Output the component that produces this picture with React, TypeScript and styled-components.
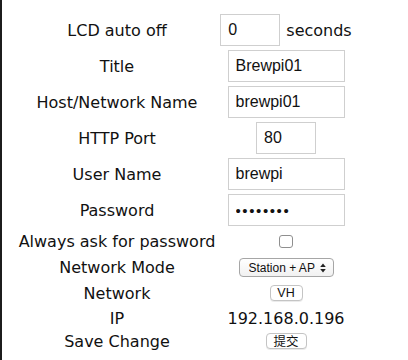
import React from 'react';
import styled, { createGlobalStyle } from 'styled-components';

const GlobalStyle = createGlobalStyle`
  html, body {
    margin: 0;
    padding: 0;
    background: #fff;
  }
  body {
    font-family: 'DejaVu Sans', Verdana, sans-serif;
    font-size: 16px;
    color: #111;
  }
`;

const Page = styled.div`
  min-height: 100vh;
  box-sizing: border-box;
  border-left: 2px solid #1c1c1c;
  padding: 12px 0 0 15px;
`;

const Form = styled.div`
  display: grid;
  grid-template-columns: 200px 134px;
  column-gap: 2px;
`;

const Label = styled.div<{ $h: number }>`
  height: ${(p) => p.$h}px;
  display: flex;
  align-items: center;
  justify-content: center;
  white-space: nowrap;
`;

const Value = styled(Label)`
  gap: 6px;
`;

const TextInput = styled.input<{ $w: number }>`
  box-sizing: border-box;
  width: ${(p) => p.$w}px;
  height: 32px;
  padding: 0 7px;
  border: 1px solid #cfcfcf;
  border-radius: 0;
  font-family: 'Liberation Sans', Arial, sans-serif;
  font-size: 16px;
  color: #111;
  background: #fff;
  outline: none;

  &[type='password'] {
    letter-spacing: 1.6px;
    font-size: 15px;
  }
`;

const Check = styled.input`
  appearance: none;
  margin: 0;
  width: 14px;
  height: 13px;
  border: 1px solid #8f8f8f;
  border-radius: 3px;
  background: #fff;
`;

const SelectWrap = styled.div`
  position: relative;
  display: inline-flex;
`;

const Select = styled.select`
  appearance: none;
  box-sizing: border-box;
  width: 95px;
  height: 19px;
  margin: 0;
  padding: 0 14px 0 9px;
  border: 1px solid #a6a6a6;
  border-radius: 4px;
  background: linear-gradient(#ffffff, #f1f1f1);
  font-family: 'Liberation Sans', Arial, sans-serif;
  font-size: 12px;
  color: #111;
  outline: none;
`;

const Arrows = styled.svg`
  position: absolute;
  right: 8px;
  top: 5px;
  pointer-events: none;
`;

const SmallButton = styled.button<{ $w: number; $cjk?: boolean }>`
  box-sizing: border-box;
  width: ${(p) => p.$w}px;
  height: 16px;
  margin: 0;
  padding: 0;
  border: 1px solid #c4c4c4;
  border-radius: 4px;
  background: #fff;
  box-shadow: 0 1px 0 rgba(0, 0, 0, 0.08);
  font-family: ${(p) =>
    p.$cjk
      ? "'Noto Sans CJK SC', 'Noto Sans CJK JP', sans-serif"
      : "'Liberation Sans', Arial, sans-serif"};
  font-size: 12.5px;
  line-height: 14px;
  color: #111;
`;

const Seconds = styled.span``;

export default function App() {
  return (
    <Page>
      <GlobalStyle />
      <Form>
        <Label $h={36}>LCD auto off</Label>
        <Value $h={36}>
          <TextInput $w={60} defaultValue="0" />
          <Seconds>seconds</Seconds>
        </Value>

        <Label $h={36}>Title</Label>
        <Value $h={36}>
          <TextInput $w={117} defaultValue="Brewpi01" />
        </Value>

        <Label $h={36}>Host/Network Name</Label>
        <Value $h={36}>
          <TextInput $w={117} defaultValue="brewpi01" />
        </Value>

        <Label $h={36}>HTTP Port</Label>
        <Value $h={36}>
          <TextInput $w={60} defaultValue="80" />
        </Value>

        <Label $h={36}>User Name</Label>
        <Value $h={36}>
          <TextInput $w={117} defaultValue="brewpi" />
        </Value>

        <Label $h={36}>Password</Label>
        <Value $h={36}>
          <TextInput $w={117} type="password" defaultValue="brewpi01" />
        </Value>

        <Label $h={27}>Always ask for password</Label>
        <Value $h={27}>
          <Check type="checkbox" />
        </Value>

        <Label $h={25}>Network Mode</Label>
        <Value $h={25}>
          <SelectWrap>
            <Select defaultValue="both">
              <option value="sta">Station</option>
              <option value="ap">AP</option>
              <option value="both">Station + AP</option>
            </Select>
            <Arrows width="6" height="10" viewBox="0 0 6 10">
              <path d="M3 0.5 L5.8 4 H0.2 Z M3 9.5 L5.8 6 H0.2 Z" fill="#222" />
            </Arrows>
          </SelectWrap>
        </Value>

        <Label $h={26}>Network</Label>
        <Value $h={26}>
          <SmallButton $w={33}>VH</SmallButton>
        </Value>

        <Label $h={24}>IP</Label>
        <Value $h={24}>192.168.0.196</Value>

        <Label $h={22}>Save Change</Label>
        <Value $h={22}>
          <SmallButton $w={41} $cjk>
            提交
          </SmallButton>
        </Value>
      </Form>
    </Page>
  );
}
